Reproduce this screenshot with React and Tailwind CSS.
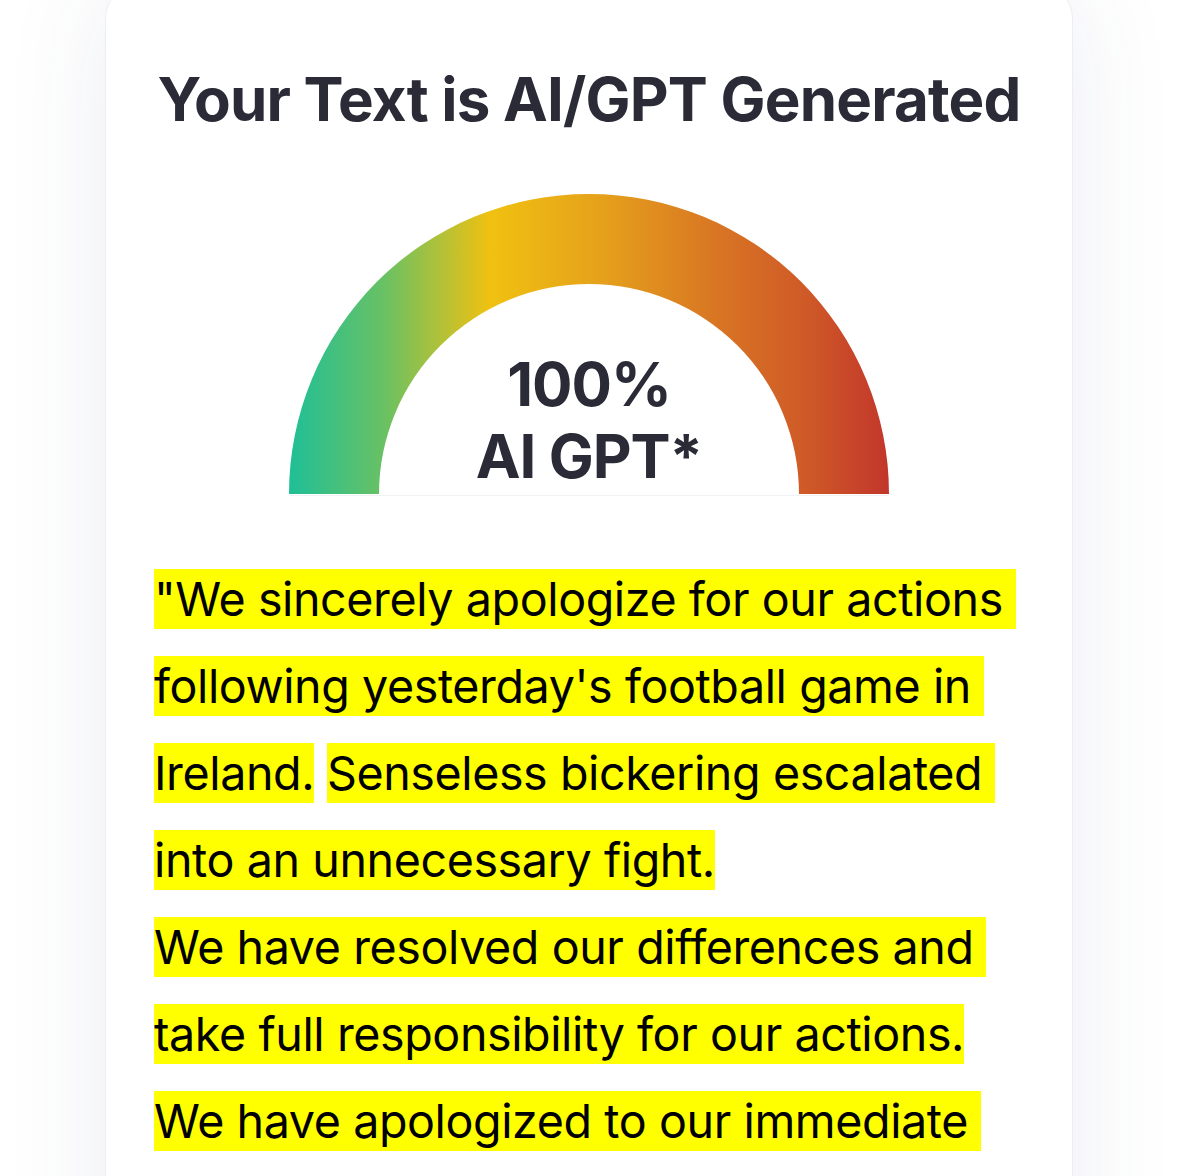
// AI detection result card

const Gauge = () => (
  <div className="relative w-[600px] h-[302px] mx-auto">
    <svg width="600" height="302" viewBox="0 0 600 302" className="block">
      <defs>
        <linearGradient id="gaugeGrad" x1="0" y1="0" x2="1" y2="0">
          <stop offset="0" stopColor="#1fbf97" />
          <stop offset="0.16" stopColor="#6ac163" />
          <stop offset="0.335" stopColor="#f0c111" />
          <stop offset="0.52" stopColor="#e5a11b" />
          <stop offset="0.72" stopColor="#d87424" />
          <stop offset="0.86" stopColor="#cf5a27" />
          <stop offset="1" stopColor="#c2362b" />
        </linearGradient>
      </defs>
      <path
        d="M0 300 A300 300 0 0 1 600 300 L510 300 A210 210 0 0 0 90 300 Z"
        fill="url(#gaugeGrad)"
      />
      <line x1="0" y1="301.5" x2="600" y2="301.5" stroke="#f1f2f5" strokeWidth="1" />
    </svg>
    <div className="absolute inset-x-0 bottom-[4px] flex flex-col items-center text-[#2a2b36] font-bold text-[60px] leading-[72px] tracking-[-1px]">
      <span>100%</span>
      <span>AI GPT*</span>
    </div>
  </div>
);

const App = () => {
  return (
    <div className="min-h-screen bg-white overflow-hidden font-['Inter',sans-serif]">
      <div className="w-[968px] ml-[105px] -mt-[14px] bg-white rounded-[32px] border border-[#eceef3] shadow-[0_0_110px_rgba(60,70,120,0.09)] pt-[76px] px-[48px] pb-[60px]">
        <h1 className="text-center text-[#2a2b36] font-bold text-[60px] leading-[72px] tracking-[-0.8px]">
          Your Text is AI/GPT Generated
        </h1>

        <div className="mt-[59px]">
          <Gauge />
        </div>

        <p className="mt-[60px] text-black text-[46.6px] leading-[87px] tracking-[-0.4px] whitespace-pre-wrap">
          <span className="bg-[#ffff00] py-[2px]">"We sincerely apologize for our actions following yesterday's football game in Ireland.</span>{' '}
          <span className="bg-[#ffff00] py-[2px]">Senseless bickering escalated into an unnecessary fight.</span>
          <br />
          <span className="bg-[#ffff00] py-[2px]">We have resolved our differences and take full responsibility for our actions.</span>{' '}
          <span className="bg-[#ffff00] py-[2px]">We have apologized to our immediate families and friends for the harm we caused."</span>
        </p>
      </div>
    </div>
  );
};

export default App;
